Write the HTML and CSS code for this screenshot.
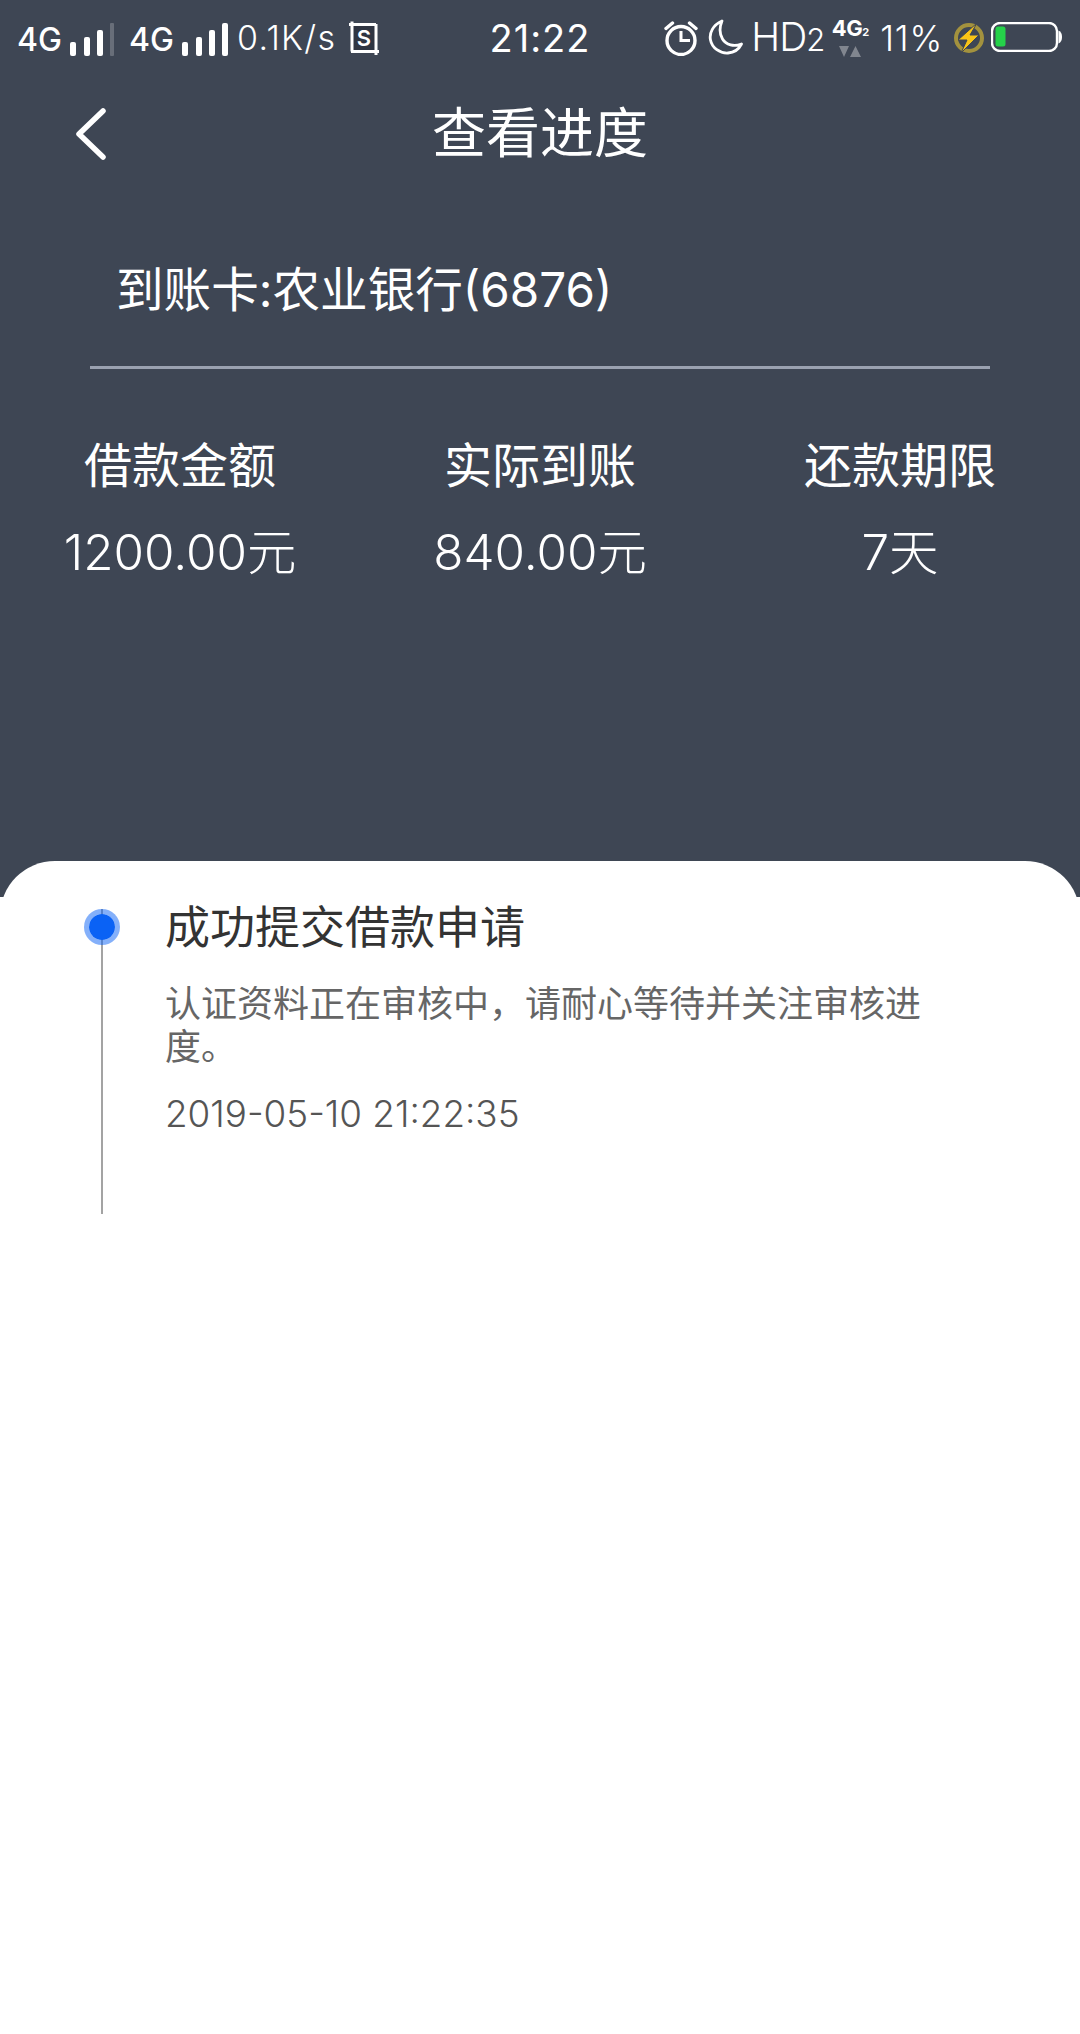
FILE: index.html
```html
<!DOCTYPE html>
<html lang="zh-CN">
<head>
<meta charset="utf-8">
<title>查看进度</title>
<link rel="stylesheet" href="styles.css">
</head>
<body>
<div class="page">
  <header class="top">
    <div class="status">
      <div class="status-left">
        <span class="net">4G</span>
        <svg class="bars" width="44" height="34" viewBox="0 0 44 34"><rect x="0" y="19" width="6" height="14" rx="2" fill="#fff"/><rect x="14" y="14" width="6" height="19" rx="2" fill="#fff"/><rect x="27" y="7" width="6" height="26" rx="2" fill="#fff"/><rect x="40" y="0" width="4" height="33" rx="1" fill="#fff" opacity=".22"/></svg>
        <span class="net net-b">4G</span>
        <svg class="bars" width="46" height="34" viewBox="0 0 46 34"><rect x="0" y="19" width="6" height="14" rx="2" fill="#fff"/><rect x="14" y="14" width="6" height="19" rx="2" fill="#fff"/><rect x="27" y="7" width="6" height="26" rx="2" fill="#fff"/><rect x="40" y="0" width="6" height="33" rx="2" fill="#fff"/></svg>
        <span class="speed">0.1K/s</span>
        <svg class="s-icon" width="32" height="34" viewBox="0 0 32 34"><rect x="4.500" y="4.500" width="23" height="25" fill="#2f3542"/><path d="M1 3.500H28M4 0.500V30.500M3 30.500H31M28 3V34" fill="none" stroke="#fff" stroke-width="3"/><text class="s-letter" x="16" y="25" text-anchor="middle">S</text></svg>
      </div>
      <div class="clock">21:22</div>
      <div class="status-right">
        <svg class="alarm" width="34" height="36" viewBox="0 0 34 36"><circle cx="17" cy="20.500" r="14" fill="none" stroke="#fff" stroke-width="3.400"/><path d="M17 11V20.500H26" fill="none" stroke="#fff" stroke-width="3"/><path d="M2 8.500L8.500 3M32 8.500L25.500 3" fill="none" stroke="#fff" stroke-width="3.400" stroke-linecap="round"/></svg>
        <svg class="moon" width="35" height="36" viewBox="0 0 35 36"><path d="M14 2C5 6 1 14 2.500 21C4 29 12 34.500 20 34C26 33.500 31 30 33.500 25C26 28 18 26 14.500 20C11 14 11.500 8 14 2Z" fill="none" stroke="#fff" stroke-width="2.800" stroke-linejoin="round"/></svg>
        <span class="hd">HD<small>2</small></span>
        <div class="sim2">
          <span class="sim2-text">4G<small>2</small></span>
          <svg width="22" height="11" viewBox="0 0 22 11"><path d="M0 0H10L5 11ZM11 11L16.500 0L22 11Z" fill="#fff" opacity=".35"/></svg>
        </div>
        <span class="pct">11%</span>
        <svg class="charge" width="32" height="34" viewBox="0 0 32 34"><circle cx="16" cy="17" r="13" fill="none" stroke="#a3923e" stroke-width="4"/><path d="M24 2L5 19H14L8 32L26 14H17Z" fill="#f9c416" stroke="#3e4654" stroke-width="1"/></svg>
        <svg class="battery" width="71" height="30" viewBox="0 0 71 30"><rect x="1" y="1" width="65" height="28" rx="8" fill="none" stroke="#fff" stroke-width="2.400"/><rect x="4.500" y="4.500" width="10" height="20" rx="2.500" fill="#25d24a"/><path d="M67.500 8.500C70 9.500 71 12 71 15C71 18 70 20.500 67.500 21.500Z" fill="#fff"/></svg>
      </div>
    </div>

    <nav class="nav">
      <svg class="back" width="32" height="52" viewBox="0 0 32 52"><path d="M28 3L4 26L28 49" fill="none" stroke="#fff" stroke-width="5.500" stroke-linecap="round" stroke-linejoin="round"/></svg>
      <h1 class="title">查看进度</h1>
    </nav>

    <div class="card-name">到账卡:农业银行(6876)</div>
    <div class="rule"></div>

    <div class="stats">
      <div class="stat"><div class="stat-label">借款金额</div><div class="stat-value">1200.00元</div></div>
      <div class="stat"><div class="stat-label">实际到账</div><div class="stat-value">840.00元</div></div>
      <div class="stat"><div class="stat-label">还款期限</div><div class="stat-value">7天</div></div>
    </div>
  </header>

  <main class="sheet">
    <div class="step">
      <div class="rail">
        <span class="dot"></span>
      </div>
      <div class="step-body">
        <h2 class="step-title">成功提交借款申请</h2>
        <p class="step-desc">认证资料正在审核中，请耐心等待并关注审核进度。</p>
        <p class="step-time">2019-05-10 21:22:35</p>
      </div>
    </div>
  </main>
</div>
</body>
</html>
```
FILE: styles.css
```css
* { box-sizing: border-box; }
html, body { margin: 0; padding: 0; }
body {
  width: 1080px;
  height: 2034px;
  overflow: hidden;
  font-family: Inter, "Noto Sans CJK SC", sans-serif;
  color: #fff;
}
.page {
  display: flex;
  flex-direction: column;
  height: 2034px;
  background: linear-gradient(#3e4654 897px, #fff 897px);
}
.top { height: 861px; flex: none; }

.status {
  display: grid;
  grid-template-columns: 1fr auto 1fr;
  align-items: center;
  height: 74px;
}
.status-left { display: flex; align-items: center; padding-left: 17px; }
.status-right { display: flex; align-items: center; justify-content: flex-end; padding-right: 18px; }
.net { font-size: 32px; font-weight: 500; line-height: 34px; width: 53px; margin-top: 6px; }
.net-b { margin-left: 15px; }
.bars { margin-top: 6px; }
.speed { font-size: 34px; font-weight: 300; line-height: 34px; margin-left: 9px; margin-top: 2px; letter-spacing: 1.3px; }
.s-icon { margin-left: 12px; margin-top: 2px; }
.s-letter { font-size: 22px; font-weight: 600; fill: #fff; }
.clock { font-size: 38px; line-height: 40px; margin-top: 2px; letter-spacing: 1px; }
.alarm { margin-top: 2px; }
.moon { margin-left: 10px; }
.hd { font-size: 39px; font-weight: 300; line-height: 40px; margin-left: 8px; margin-top: 2px; letter-spacing: -1px; }
.hd small { font-size: 31px; }
.sim2 { display: flex; flex-direction: column; align-items: center; margin-left: 8px; width: 36px; }
.sim2-text { font-size: 22px; font-weight: 700; line-height: 22px; letter-spacing: -0.5px; }
.sim2-text small { font-size: 11px; }
.sim2 svg { margin-top: 3px; }
.pct { font-size: 35px; font-weight: 300; line-height: 36px; margin-left: 12px; margin-top: 2px; letter-spacing: 0.8px; }
.charge { margin-left: 10px; margin-top: 2px; }
.battery { margin-left: 6px; margin-top: 0; }

.nav { position: relative; height: 74px; margin-top: 23px; text-align: center; }
.back { position: absolute; left: 75px; top: 11px; }
.title { margin: 0; font-size: 54px; font-weight: 400; line-height: 74px; }

.card-name { margin: 89px 0 0 116px; font-size: 47.6px; line-height: 60px; }
.rule { height: 3px; margin: 46px 90px 0; background: #9aa1b0; }

.stats { display: grid; grid-template-columns: repeat(3, 360px); margin-top: 64px; }
.stat { text-align: center; }
.stat-label { font-size: 48px; line-height: 66px; }
.stat-value { font-size: 49.4px; font-weight: 300; line-height: 66px; margin-top: 20px; }

.sheet {
  flex: 1;
  background: #fff;
  border-radius: 55px 55px 0 0;
}
.step { display: flex; height: 353px; padding-top: 48px; }
.rail {
  position: relative;
  flex: none;
  width: 165px;
}
.rail::before {
  content: "";
  position: absolute;
  left: 101px;
  top: 0;
  bottom: 0;
  width: 2px;
  background: #a3a3a3;
}
.dot {
  position: absolute;
  left: 84px;
  top: 0;
  width: 36px;
  height: 36px;
  border-radius: 50%;
  background: #0a62f5;
  border: 5.500px solid rgba(10, 98, 245, 0.5);
  background-clip: padding-box;
}
.step-body { flex: 1; padding-right: 130px; }
.step-title { margin: 0; font-size: 45px; font-weight: 400; line-height: 38px; color: #333; }
.step-desc { margin: 36px 0 0; font-size: 36px; line-height: 43px; color: #666; }
.step-time { margin: 23px 0 0; font-size: 36.8px; font-weight: 300; line-height: 44px; color: #555; }
```
